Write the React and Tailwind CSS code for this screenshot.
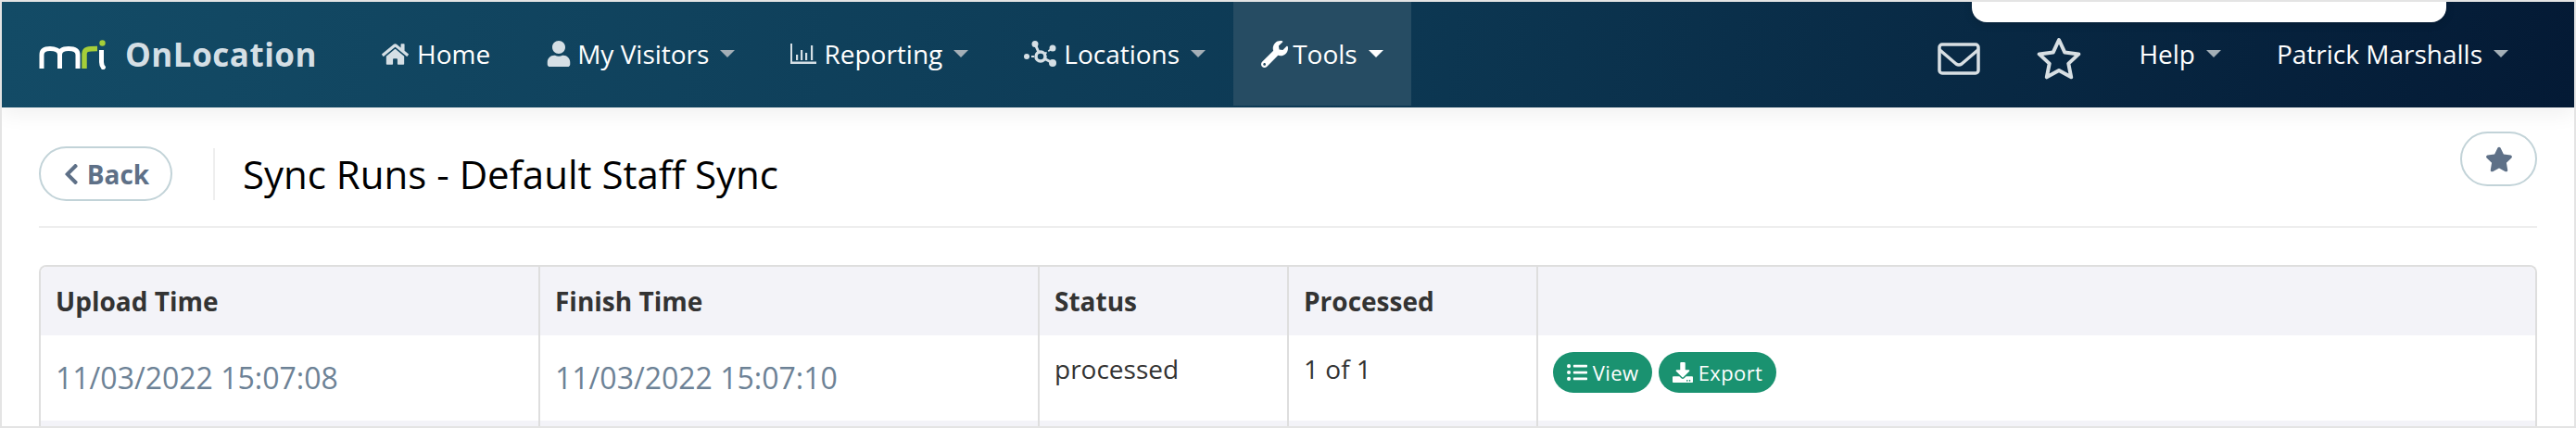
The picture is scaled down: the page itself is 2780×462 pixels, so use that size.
import { FaHome, FaUser, FaWrench, FaStar, FaListUl, FaDownload, FaChevronLeft } from 'react-icons/fa'

function Caret({ active }) {
  return (
    <svg width="16" height="8" viewBox="0 0 16 8" className={active ? 'ml-[12px] text-white' : 'ml-[12px] text-[#a4afb7]'}>
      <path d="M0 0h16L8 8z" fill="currentColor" />
    </svg>
  )
}

function MriLogo() {
  return (
    <svg width="72" height="32" viewBox="0 0 72 32" className="shrink-0">
      <path d="M3 31V16C3 11 7 9.500 12 9.500S22.500 11 22.500 16V31M22.500 16C22.500 11 27 9.500 32 9.500S42 11 42 16V31" fill="none" stroke="#fff" strokeWidth="5" />
      <path d="M49 31V15C49 10 53 9.500 63 9.500" fill="none" stroke="#a6ce39" strokeWidth="5.500" />
      <path d="M67.500 11V24C67.500 28 69 30 71 31.500" fill="none" stroke="#fff" strokeWidth="5" />
      <circle cx="68.500" cy="3.500" r="3.200" fill="#a6ce39" />
    </svg>
  )
}

function ChartIcon() {
  return (
    <svg width="28" height="22" viewBox="0 0 28 22" className="shrink-0 text-[#d5dfe5]" fill="currentColor">
      <path d="M0 0h2v19.500h26V22H0z" />
      <path d="M6 12h2.200v6H6zM11 7h2.200v11H11zM16 10h2.200v8H16zM22 2h2.200v16H22z" />
    </svg>
  )
}

function NodesIcon() {
  return (
    <svg width="35" height="28" viewBox="0 0 35 28" className="shrink-0 text-[#d5dfe5]" fill="none" stroke="currentColor">
      <path d="M12 3.500l6 13.500M18 17l13 7" strokeWidth="3" />
      <path d="M3 17h15M18 17l13-9" strokeWidth="1.800" strokeDasharray="3 2" />
      <circle cx="12" cy="3.500" r="3.500" fill="currentColor" stroke="none" />
      <circle cx="3" cy="17" r="3" fill="currentColor" stroke="none" />
      <circle cx="31" cy="8" r="3.500" fill="currentColor" stroke="none" />
      <circle cx="31" cy="24" r="4" fill="currentColor" stroke="none" />
      <circle cx="18" cy="17" r="5" strokeWidth="3.500" fill="#0f3f5b" />
    </svg>
  )
}

function MailIcon() {
  return (
    <svg width="46" height="35" viewBox="0 0 46 35" fill="none" stroke="#d8dfe3" strokeWidth="3.500" strokeLinejoin="round" strokeLinecap="round" className="shrink-0">
      <rect x="2" y="2" width="42" height="31" rx="3" />
      <path d="M2.500 8l17.500 15q3 2 6 0l17.500-15" />
    </svg>
  )
}

function StarOutline() {
  return (
    <svg width="48" height="46" viewBox="0 0 48 46" fill="none" stroke="#d8dfe3" strokeWidth="4" strokeLinejoin="round" className="shrink-0">
      <path d="M24 3l6.300 13.600 15 1.800-11 10.200 2.900 14.700L24 35.900l-13.200 7.400 2.900-14.700-11-10.200 15-1.800z" />
    </svg>
  )
}

function NavItem({ icon, label, caret = true, active, gap = 'gap-[9px]' }) {
  return (
    <a className={`flex h-[112px] mb-[2px] items-center self-start px-[30px] text-[28px] text-white ${active ? 'bg-[#264c63]' : ''}`}>
      <span className={`flex items-center ${gap}`}>
        {icon}
        <span>{label}</span>
      </span>
      {caret && <Caret active={active} />}
    </a>
  )
}

function GreenBtn({ icon, label, w }) {
  return (
    <button className={`flex h-[44px] items-center justify-center gap-[6px] rounded-full bg-[#1a9270] text-[22px] font-medium tracking-[0.4px] text-white ${w}`}>
      {icon}
      {label}
    </button>
  )
}

const cell = 'border-r-2 border-[#dedede] px-[16px]'

export default function App() {
  return (
    <div className="box-border h-[462px] w-[2780px] overflow-hidden border-2 border-[#e4e4e4] bg-white font-['Open_Sans',sans-serif] text-[28px] text-[#333]">
      <nav className="relative flex h-[114px] items-start bg-[linear-gradient(97deg,#134b66_0%,#0d3a55_50%,#041a35_100%)] pl-[40px] pr-[41px] shadow-[0_8px_20px_rgba(0,0,0,0.06)]">
        <div className="absolute left-[2126px] top-0 h-[22px] w-[512px] rounded-b-[16px] bg-white shadow-[0_2px_10px_rgba(0,0,0,0.15)]" />
        <div className="flex h-[114px] w-[340px] items-center gap-[21px]">
          <MriLogo />
          <span className="text-[35px] font-bold tracking-[0.5px] text-[#d5dfe5]">OnLocation</span>
        </div>
        <NavItem icon={<FaHome className="text-[29px] text-[#d5dfe5]" />} label="Home" caret={false} />
        <NavItem icon={<FaUser className="text-[28px] text-[#d5dfe5]" />} label="My Visitors" gap="gap-[6px]" />
        <NavItem icon={<ChartIcon />} label="Reporting" gap="gap-[8px]" />
        <NavItem icon={<NodesIcon />} label="Locations" gap="gap-[8px]" />
        <NavItem icon={<FaWrench className="text-[29px] text-white" />} label="Tools" gap="gap-[5px]" active />
        <div className="ml-auto flex items-center self-start">
          <div className="flex h-[114px] items-center gap-[61px] pr-[32px] pt-[8px]">
            <MailIcon />
            <StarOutline />
          </div>
          <NavItem label="Help" />
          <NavItem label="Patrick Marshalls" />
        </div>
      </nav>

      <div className="mx-[40px] flex h-[130px] items-start justify-between border-b-2 border-[#eeeeee]">
        <div className="mt-[42px] flex items-center">
          <button className="flex h-[59px] w-[144px] items-center justify-center gap-[4px] rounded-full border-2 border-[#c2d3d8] pr-[3px] text-[28px] font-bold text-[#5e7087]">
            <FaChevronLeft className="text-[26px]" />
            Back
          </button>
          <div className="ml-[44px] mr-[30px] h-[56px] w-[2px] bg-[#eeeeee]" />
          <h1 className="text-[42px] leading-none font-normal text-black">Sync Runs - Default Staff Sync</h1>
        </div>
        <button className="mt-[26px] flex h-[59px] w-[83px] items-center justify-center rounded-full border-2 border-[#c2d3d8] text-[#5e7087]">
          <FaStar className="text-[30px]" />
        </button>
      </div>

      <div className="mx-[40px] mt-[40px] rounded-t-[8px] border-x-2 border-t-2 border-[#dedede] bg-white">
        <div className="grid h-[74px] grid-cols-[539px_539px_269px_269px_1fr] items-stretch rounded-t-[6px] bg-[#f3f3f8] font-bold">
          <div className={`${cell} flex items-center`}>Upload Time</div>
          <div className={`${cell} flex items-center`}>Finish Time</div>
          <div className={`${cell} flex items-center`}>Status</div>
          <div className={`${cell} flex items-center`}>Processed</div>
          <div />
        </div>
        <div className="grid h-[92px] grid-cols-[539px_539px_269px_269px_1fr] items-stretch">
          <div className={`${cell} flex items-center text-[32px] text-[#6d8296]`}>11/03/2022 15:07:08</div>
          <div className={`${cell} flex items-center text-[32px] text-[#6d8296]`}>11/03/2022 15:07:10</div>
          <div className={`${cell} pt-[15px]`}>processed</div>
          <div className={`${cell} pt-[15px]`}>1 of 1</div>
          <div className="flex items-start gap-[7px] pl-[16px] pt-[18px]">
            <GreenBtn icon={<FaListUl className="text-[22px]" />} label="View" w="w-[107px]" />
            <GreenBtn icon={<FaDownload className="text-[22px]" />} label="Export" w="w-[127px]" />
          </div>
        </div>
        <div className="grid h-[6px] grid-cols-[539px_539px_269px_269px_1fr] bg-[#f3f3f8]">
          <div className={cell} />
          <div className={cell} />
          <div className={cell} />
          <div className={cell} />
        </div>
      </div>
    </div>
  )
}
